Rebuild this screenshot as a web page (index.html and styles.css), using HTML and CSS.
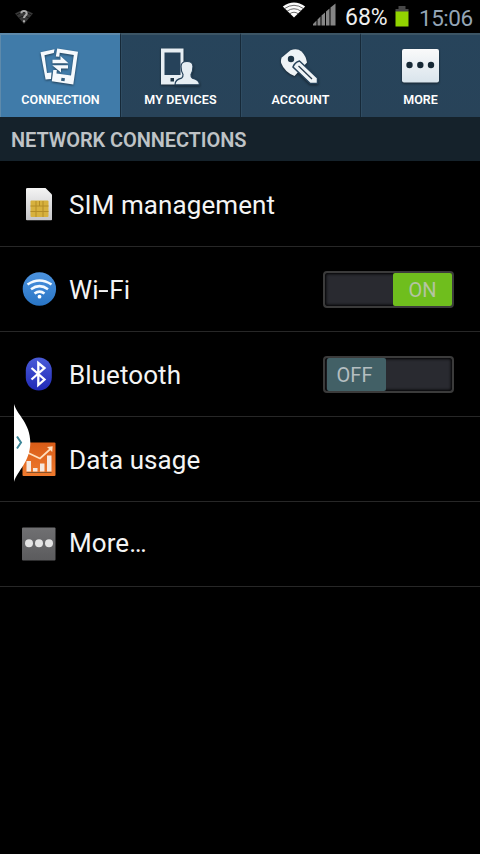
FILE: index.html
```html
<!DOCTYPE html>
<html lang="en">
<head>
<meta charset="utf-8">
<title>Settings</title>
<link rel="stylesheet" href="styles.css">
</head>
<body>
<div class="screen">
  <header class="status">
    <svg class="unknown-net" width="20" height="16" viewBox="0 0 20 16">
      <path d="M1 4.5Q10-1.5 19 4.500L10 15Z" fill="#383838"/>
      <path d="M2.500 6Q10 1 17.500 6M5 9Q10 5.500 15 9" fill="none" stroke="#111" stroke-width=".8"/>
      <path d="M7.300 4.400Q7.500 2 10 2T12.700 4.400C12.700 6.500 10 6.500 10 9M10 11.300v2" fill="none" stroke="#aaa" stroke-width="2"/>
    </svg>
    <svg class="wifi" width="24" height="16" viewBox="0 0 24 16">
      <path d="M.8 4.600Q12-3.500 23.200 4.600L12 15.500Z" fill="#fafafa"/>
      <path d="M2.500 6.600Q12 0 21.500 6.600M5 9.200Q12 4.300 19 9.200M7.700 11.800Q12 8.700 16.300 11.800" fill="none" stroke="#444" stroke-width=".8"/>
    </svg>
    <svg class="signal" width="23" height="23" viewBox="0 0 23 23">
      <path d="M0 22.500V21L3.500 17.500V22.500ZM4.500 22.500V16.500L7.500 13.500V22.500ZM8.500 22.500V12.500L12 9.500V22.500ZM13 22.500V8.500L16.500 5.500V22.500ZM17.500 22.500V4.500L22.500 .5V22.500Z" fill="#858585"/>
    </svg>
    <span class="percent">68%</span>
    <svg class="battery" width="14" height="21" viewBox="0 0 14 21">
      <path d="M3.500 0h7v3h3v3H.5V3h3Z" fill="#484848"/>
      <path d="M.5 5.500h13V20.500H.5Z" fill="#92d400"/>
    </svg>
    <span class="clock">15:06</span>
  </header>
  <nav class="tabs">
    <div class="tab active">
      <svg width="44" height="44" viewBox="0 0 44 44">
        <g class="shadow">
          <path fill="#f5f9fd" d="M2.500 7.200L16.500 4.200L15.800 8L6.500 10.300L9 28L13.500 27.500L13 34L7.600 34.500Z"/>
          <path fill="#f5f9fd" fill-rule="evenodd" d="M19.200 3.500L40 6.800L35.300 39.600L13.800 36.200L15.300 25H18.800L18.500 28.500L33 30.500L35.800 10L21.700 7.800L21.300 11.700L17.800 11.500Z"/>
          <path d="M14.500 14.800h8v-3.700l8 7.100h-16ZM30 20.300v3.200h-7v4L14.200 20.300Z" fill="#f5f9fd"/>
        </g>
        <path d="M23.500 32.800l3.500.5-.5 3-3.500-.5Z" fill="#315d7e"/>
      </svg>
      <span class="w-connection">CONNECTION</span>
    </div>
    <div class="tab">
      <svg width="44" height="44" viewBox="0 0 44 44">
        <g class="shadow">
          <path fill="#e7eef3" d="M3 3.500H25.500V39.500H3Z"/>
          <path d="M6.500 7.500H22.500V30H6.500Z" fill="#26425a"/>
          <path d="M17 39.800Q17 34.700 23.500 33.200Q25.300 32 25 29.500Q23 26 23 21.500Q23 16.500 29 16.500T35 21.500Q35 26 33 29.500Q32.700 32 34.500 33.200Q41.500 34.700 41.500 39.800Z" fill="#e7eef3" stroke="#26425a" stroke-width="1.200"/>
          <rect x="12.500" y="33" width="3.500" height="3.500" fill="#1d3445"/>
        </g>
      </svg>
      <span class="w-devices">MY DEVICES</span>
    </div>
    <div class="tab">
      <svg width="44" height="44" viewBox="0 0 44 44">
        <g class="shadow">
          <path d="M3.800 12.500L12.500 5.300Q19 2.500 23.500 6.500Q28 11 29 17.500L16.500 31Q6.500 27 3.100 18Q2.600 14.500 3.800 12.500Z" fill="#eef3f6"/>
          <path d="M15 22Q16.500 17.500 21.500 16L39.500 33V38.500H32.200Z" fill="#eef3f6" stroke="#26425a" stroke-width="1.500"/>
          <path d="M20.500 21L34 34" stroke="#26384a" stroke-width="1.300"/>
          <circle cx="13" cy="14" r="3.200" fill="#1d3445"/>
        </g>
      </svg>
      <span class="w-account">ACCOUNT</span>
    </div>
    <div class="tab">
      <svg width="44" height="44" viewBox="0 0 44 44">
        <defs><linearGradient id="pale" x2="0" y2="1"><stop stop-color="#fafafa"/><stop offset="1" stop-color="#d9e4ec"/></linearGradient></defs>
        <rect class="shadow" x="4" y="4" width="37" height="33.500" rx="2" fill="url(#pale)"/>
        <g fill="#172936"><circle cx="11.500" cy="20" r="3.200"/><circle cx="22.300" cy="20" r="3.200"/><circle cx="33" cy="20" r="3.200"/></g>
      </svg>
      <span class="w-more">MORE</span>
    </div>
  </nav>
  <h1 class="section"><span>NETWORK CONNECTIONS</span></h1>
  <main class="list">
    <div class="row first">
      <svg class="icon" width="36" height="36" viewBox="0 0 36 36">
        <defs><linearGradient id="sim" x2="0" y2="1"><stop stop-color="#f4f4f4"/><stop offset="1" stop-color="#c5c5c8"/></linearGradient></defs>
        <path d="M6.500 2h18l6.500 6.500v25q0 .8-.8.800H6q-1 0-1-.8V3q0-1 1.500-1Z" fill="url(#sim)"/>
        <rect x="9.500" y="14.500" width="18" height="16.500" rx="1" fill="#d7b13d"/>
        <path d="M9.500 20h18M9.500 25.500h18M15 15v16M22 15v16M18.500 15v5" stroke="#b38c26" stroke-width="1" fill="none"/>
      </svg>
      <span class="label l-sim">SIM management</span>
    </div>
    <div class="row">
      <svg class="icon" width="36" height="36" viewBox="0 0 36 36">
        <defs><linearGradient id="blue" x2="0" y2="1"><stop stop-color="#4c93df"/><stop offset="1" stop-color="#2975c5"/></linearGradient></defs>
        <circle cx="18.400" cy="18" r="16.700" fill="url(#blue)"/>
        <g fill="none" stroke="#f4faff" stroke-width="2.600" stroke-linecap="butt"><path d="M6.500 13.500Q18.500 5.500 30.500 13.500M10 18.200Q18.500 12 27 18.200M13.500 22.500Q18.500 18.700 23.500 22.500"/></g>
        <circle cx="18.500" cy="25.700" r="1.900" fill="#fff"/>
      </svg>
      <span class="label l-wifi">Wi<b class="dash">-</b>Fi</span>
      <div class="toggle on"><span>ON</span></div>
    </div>
    <div class="row">
      <svg class="icon" width="36" height="36" viewBox="0 0 36 36">
        <defs><linearGradient id="bt" x2="0" y2="1"><stop stop-color="#4a5bd8"/><stop offset="1" stop-color="#2029b6"/></linearGradient></defs>
        <rect x="4.800" y="1.500" width="26" height="33" rx="13" fill="url(#bt)"/>
        <path d="M10.500 12L23.500 23.500L17.300 29V7L23.500 12L10.500 23.500" fill="none" stroke="#fff" stroke-width="2.300"/>
      </svg>
      <span class="label l-bluetooth">Bluetooth</span>
      <div class="toggle off"><span>OFF</span></div>
    </div>
    <div class="row">
      <svg class="icon" width="36" height="36" viewBox="0 0 36 36">
        <defs><linearGradient id="org" x2="0" y2="1"><stop stop-color="#d95c17"/><stop offset="1" stop-color="#ef7a2e"/></linearGradient></defs>
        <rect x="1.500" y="1.500" width="33" height="33.500" rx="1" fill="url(#org)"/>
        <path d="M2 9.500L19 17.500L30.500 7" fill="none" stroke="#ffe0bf" stroke-width="1.700"/>
        <path d="M26 6l5.700-.8-.5 5.800Z" fill="#ffe0bf"/>
        <path d="M5.500 20h4.500v10.500H5.500ZM12 27h4.500v3.500H12ZM19 22.500h4.500v8H19ZM26 14.500h4.500v16H26Z" fill="#f5e8df"/>
        <path d="M5.500 31.500h25" stroke="#87522a" stroke-width="1"/>
      </svg>
      <span class="label l-data">Data usage</span>
      <svg class="handle" width="17" height="78" viewBox="0 0 17 78">
        <path d="M0 0C3 11 16.300 19 16.300 38.500S3 67 0 78Z" fill="#fff"/>
        <path d="M3 32.500L7 38.500L3 44.500" fill="none" stroke="#3e8798" stroke-width="2"/>
      </svg>
    </div>
    <div class="row last">
      <svg class="icon" width="36" height="36" viewBox="0 0 36 36">
        <defs><linearGradient id="gray" x2="0" y2="1"><stop stop-color="#707072"/><stop offset="1" stop-color="#5b5b5d"/></linearGradient></defs>
        <rect x="1" y="1.500" width="33.500" height="33" rx="1" fill="url(#gray)"/>
        <g fill="#e3e3e3"><circle cx="8" cy="17.200" r="4"/><circle cx="18" cy="17.200" r="4"/><circle cx="28" cy="17.200" r="4"/></g>
      </svg>
      <span class="label l-dots">More…</span>
    </div>
  </main>
</div>
</body>
</html>
```
FILE: styles.css
```css
* { box-sizing: border-box; }
body { margin: 0; background: #000; font-family: Roboto, "Liberation Sans", sans-serif; }
.screen { width: 480px; height: 854px; overflow: hidden; background: #000; }
svg { display: block; flex: none; }
span { white-space: nowrap; }

.status { height: 33px; display: flex; align-items: flex-start; padding-left: 14px; }
.unknown-net { margin-top: 9px; }
.wifi { margin: 2px 0 0 248px; }
.signal { margin: 3px 0 0 7px; }
.percent { width: 43px; margin: 4px 0 0 9px; font-size: 23px; line-height: 27px; color: #eee; }
.battery { margin: 6px 0 0 7px; }
.clock { margin: 4px 0 0 10px; font-size: 22.500px; line-height: 28px; color: #94a5b6; letter-spacing: -.5px; }

.tabs { height: 84px; display: grid; grid-template-columns: repeat(4, 120px); }
.tab {
  display: flex; flex-direction: column; align-items: center;
  padding-top: 10px; color: #fff; font-size: 12.500px; font-weight: 600; line-height: 16px;
  background: linear-gradient(#27445b, #284359);
  border-top: 2px solid #3c5565; border-left: 1px solid #162938; box-shadow: inset 1px 0 #2f4c62;
}
.tab.active { background: #407ba9; border-color: #5e8aab; box-shadow: none; }
.tab svg { margin-right: 2px; }
.tab span { margin-top: 3px; }
.shadow { filter: drop-shadow(0 1px 1px rgba(0, 0, 0, .5)); }
.w-devices { letter-spacing: .1px; }

.section {
  height: 44px; margin: 0; padding: 10px 0 0 11px; background: #15222b;
  color: #bfc3c6; font-size: 20px; line-height: 26px; font-weight: 600; letter-spacing: -.1px;
}
.section span { display: block; }

.row { height: 85px; display: flex; align-items: center; padding: 0 26px 0 21px; border-bottom: 1px solid #272727; position: relative; }
.row.first { height: 86px; }
.icon { margin-right: 12px; }
.label { color: #f4f4f4; font-size: 26px; line-height: 34px; margin-top: 2px; letter-spacing: .08px; }
.dash { display: inline-block; font-weight: 400; transform: scaleX(1.45); margin: 0 2px 0 1.500px; }
.last .label { margin-top: -2px; }

.toggle {
  width: 131px; height: 37px; margin: 1px 0 0 auto; display: flex;
  border: 2px solid #3b3b3b; border-radius: 4px; background: #292a30;
  box-shadow: inset 0 0 3px 1px #000;
}
.toggle span { height: 33px; width: 59px; border-radius: 2px; text-align: center; font-size: 20px; line-height: 34px; }
.toggle.on { justify-content: flex-end; }
.toggle.on span { background: #6fbe1d; color: #b4c4a2; }
.toggle.off { padding-left: 2px; }
.toggle.off span { background: #426066; color: #b4bec1; padding-right: 4px; }

.handle { position: absolute; left: 14px; top: -13px; }
```
